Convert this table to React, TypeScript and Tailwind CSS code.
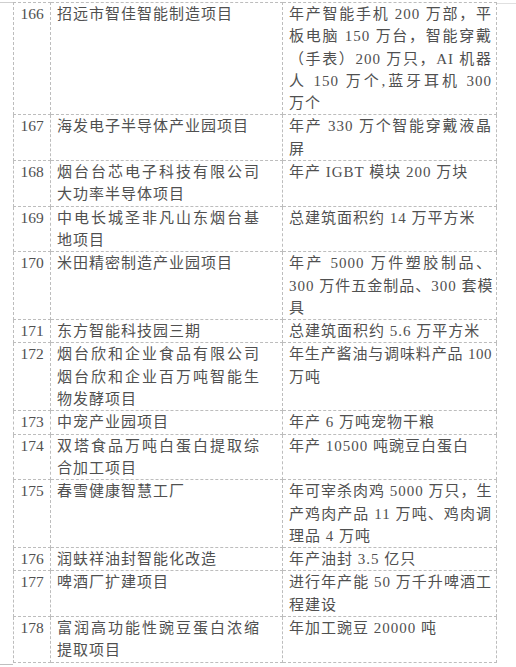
type Row = { n: string; name: string[]; desc: string[] };

const rows: Row[] = [
  { n: '166', name: ['招远市智佳智能制造项目'], desc: ['年产智能手机 200 万部，平', '板电脑 150 万台，智能穿戴', '（手表）200 万只，AI 机器', '人 150 万个,蓝牙耳机 300', '万个'] },
  { n: '167', name: ['海发电子半导体产业园项目'], desc: ['年产 330 万个智能穿戴液晶', '屏'] },
  { n: '168', name: ['烟台台芯电子科技有限公司', '大功率半导体项目'], desc: ['年产 IGBT 模块 200 万块'] },
  { n: '169', name: ['中电长城圣非凡山东烟台基', '地项目'], desc: ['总建筑面积约 14 万平方米'] },
  { n: '170', name: ['米田精密制造产业园项目'], desc: ['年产 5000 万件塑胶制品、', '300 万件五金制品、300 套模', '具'] },
  { n: '171', name: ['东方智能科技园三期'], desc: ['总建筑面积约 5.6 万平方米'] },
  { n: '172', name: ['烟台欣和企业食品有限公司', '烟台欣和企业百万吨智能生', '物发酵项目'], desc: ['年生产酱油与调味料产品 100', '万吨'] },
  { n: '173', name: ['中宠产业园项目'], desc: ['年产 6 万吨宠物干粮'] },
  { n: '174', name: ['双塔食品万吨白蛋白提取综', '合加工项目'], desc: ['年产 10500 吨豌豆白蛋白'] },
  { n: '175', name: ['春雪健康智慧工厂'], desc: ['年可宰杀肉鸡 5000 万只，生', '产鸡肉产品 11 万吨、鸡肉调', '理品 4 万吨'] },
  { n: '176', name: ['润蚨祥油封智能化改造'], desc: ['年产油封 3.5 亿只'] },
  { n: '177', name: ['啤酒厂扩建项目'], desc: ['进行年产能 50 万千升啤酒工', '程建设'] },
  { n: '178', name: ['富润高功能性豌豆蛋白浓缩', '提取项目'], desc: ['年加工豌豆 20000 吨'] },
];

// lines that are too long at the normal spacing
const tight = new Set(['年生产酱油与调味料产品 100']);

// each line is its own block; all but the last are stretched to the full width
function Lines({ lines }: { lines: string[] }) {
  return (
    <div className="w-[203px]">
      {lines.map((l, i) => (
        <div
          key={i}
          className={`whitespace-nowrap ${tight.has(l) ? 'tracking-[0.5px]' : ''} ${i < lines.length - 1 ? 'text-justify [text-align-last:justify]' : ''}`}
        >
          {l}
        </div>
      ))}
    </div>
  );
}

export default function App() {
  const cell = 'border border-dashed border-[#bdbdbd] align-top p-0';
  return (
    <div className="w-[516px] h-[667px] bg-white overflow-hidden flex items-start pt-[2px] font-['Liberation_Serif','Noto_Sans_CJK_SC',serif] text-[#505050]">
      {/* stray page rules on the left */}
      <div className="w-[13px] h-[663px] flex flex-col justify-between">
        <div className="h-px bg-[#cfcfcf]" />
        <div className="h-px bg-[#bfbfbf]" />
      </div>

      <table className="border-collapse w-[483px] table-fixed leading-[22.3px]">
        <colgroup>
          <col className="w-[37px]" />
          <col className="w-[232px]" />
          <col className="w-[214px]" />
        </colgroup>
        <tbody>
          {rows.map((r) => (
            <tr key={r.n}>
              <td className={`${cell} text-center text-[15.5px]`}>{r.n}</td>
              <td className={`${cell} pl-[6px] text-[15px] tracking-[1px]`}>
                <Lines lines={r.name} />
              </td>
              <td className={`${cell} pl-[6px] text-[15px] tracking-[1px]`}>
                <Lines lines={r.desc} />
              </td>
            </tr>
          ))}
        </tbody>
      </table>

      <div className="flex-1 h-px mt-px bg-[#e0e0e0]" />
    </div>
  );
}
